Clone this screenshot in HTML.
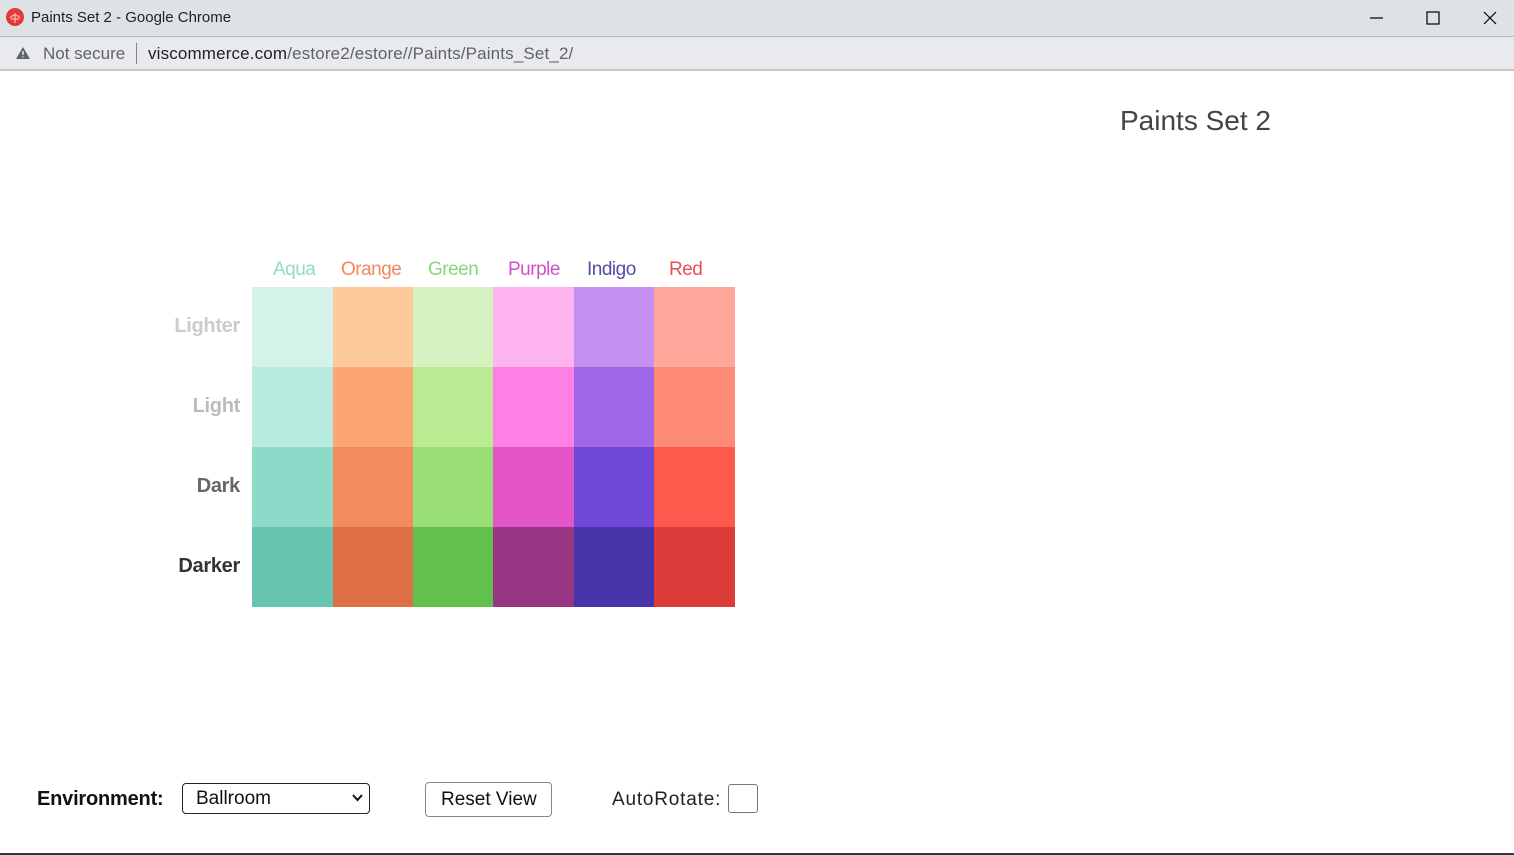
<!DOCTYPE html>
<html><head><meta charset="utf-8"><style>
*{margin:0;padding:0;box-sizing:border-box}
body{width:1514px;height:855px;position:relative;background:#fff;font-family:"Liberation Sans",sans-serif;overflow:hidden}
.a{position:absolute;white-space:nowrap}
.cell{position:absolute;width:81px;height:80px}
.col{font-size:19px;top:259px;letter-spacing:-0.5px}
.row{font-size:20px;font-weight:bold;right:1274px;letter-spacing:-0.3px}
</style></head><body>
<div class="a" style="left:0;top:0;width:1514px;height:36px;background:#dee1e6"></div>
<div class="a" style="left:0;top:36px;width:1514px;height:1px;background:#b8babe"></div>
<div class="a" style="left:0;top:37px;width:1514px;height:32px;background:#e8eaed"></div>
<div class="a" style="left:0;top:69px;width:1514px;height:2px;background:#c4c6c9"></div>
<div class="a" style="left:6px;top:8px;width:18px;height:18px;border-radius:50%;background:#e53935"></div>
<svg class="a" style="left:6px;top:8px" width="18" height="18"><path d="M4 10 Q9 4 14 10 M9 5 V15 M5 11 H13" stroke="#fbb" stroke-width="1.2" fill="none"/></svg>
<div class="a" style="left:31px;top:9px;font-size:15px;color:#202124">Paints Set 2 - Google Chrome</div>
<svg class="a" style="left:1370px;top:10px" width="130" height="16"><path d="M0 8H13" stroke="#000" stroke-width="1.2"/><rect x="57" y="2" width="12" height="12" fill="none" stroke="#000" stroke-width="1.2"/><path d="M114 2L126 14M126 2L114 14" stroke="#000" stroke-width="1.2"/></svg>
<svg class="a" style="left:15px;top:46px" width="16" height="14"><path d="M8 1L15 13H1Z" fill="#5f6368"/><path d="M8 5V9M8 10.5V11.5" stroke="#e8eaed" stroke-width="1.5"/></svg>
<div class="a" style="left:43px;top:44px;font-size:17px;color:#5f6368">Not secure</div>
<div class="a" style="left:136px;top:43px;width:1px;height:21px;background:#80868b"></div>
<div class="a" style="left:148px;top:44px;font-size:17px;color:#202124;letter-spacing:0.15px">viscommerce.com<span style="color:#5f6368">/estore2/estore//Paints/Paints_Set_2/</span></div>
<div class="a" style="left:1120px;top:105px;font-size:28px;color:#444">Paints Set 2</div>

<div class="a col" style="left:273px;color:#8fdcc8">Aqua</div>
<div class="a col" style="left:341px;color:#f08a5e">Orange</div>
<div class="a col" style="left:428px;color:#88d878">Green</div>
<div class="a col" style="left:508px;color:#d050c8">Purple</div>
<div class="a col" style="left:587px;color:#5a48a8">Indigo</div>
<div class="a col" style="left:669px;color:#e85050">Red</div>

<div class="a row" style="top:315px;color:#ccc">Lighter</div>
<div class="a row" style="top:395px;color:#bbb">Light</div>
<div class="a row" style="top:475px;color:#666">Dark</div>
<div class="a row" style="top:555px;color:#333">Darker</div>

<div class="cell" style="left:252px;top:287px;background:#d4f2ea"></div>
<div class="cell" style="left:333px;top:287px;background:#fcc99a"></div>
<div class="cell" style="left:413px;top:287px;background:#d6f2c0"></div>
<div class="cell" style="left:493px;top:287px;background:#feb4ee"></div>
<div class="cell" style="left:574px;top:287px;background:#c490f2"></div>
<div class="cell" style="left:654px;top:287px;background:#fea89c"></div>

<div class="cell" style="left:252px;top:367px;background:#b8eadf"></div>
<div class="cell" style="left:333px;top:367px;background:#fca772"></div>
<div class="cell" style="left:413px;top:367px;background:#baea92"></div>
<div class="cell" style="left:493px;top:367px;background:#fe80e6"></div>
<div class="cell" style="left:574px;top:367px;background:#a066e8"></div>
<div class="cell" style="left:654px;top:367px;background:#fe8a78"></div>

<div class="cell" style="left:252px;top:447px;background:#8edac8"></div>
<div class="cell" style="left:333px;top:447px;background:#f28c5c"></div>
<div class="cell" style="left:413px;top:447px;background:#9ade76"></div>
<div class="cell" style="left:493px;top:447px;background:#e456c8"></div>
<div class="cell" style="left:574px;top:447px;background:#7048d8"></div>
<div class="cell" style="left:654px;top:447px;background:#fc5a4c"></div>

<div class="cell" style="left:252px;top:527px;background:#66c4b0"></div>
<div class="cell" style="left:333px;top:527px;background:#de6e44"></div>
<div class="cell" style="left:413px;top:527px;background:#62c04c"></div>
<div class="cell" style="left:493px;top:527px;background:#983684"></div>
<div class="cell" style="left:574px;top:527px;background:#4834a8"></div>
<div class="cell" style="left:654px;top:527px;background:#da3c3a"></div>

<div class="a" style="left:37px;top:788px;font-size:20px;font-weight:bold;color:#111;letter-spacing:-0.2px">Environment:</div>
<div class="a" style="left:182px;top:783px;width:188px;height:31px;border:1px solid #222;border-radius:4px;font-size:19px;padding:4px 0 0 13px;color:#111">Ballroom</div>
<svg class="a" style="left:352px;top:794px" width="11" height="8"><path d="M1 1L5.5 6L10 1" stroke="#111" stroke-width="2" fill="none"/></svg>
<div class="a" style="left:425px;top:782px;width:127px;height:35px;border:1px solid #888;border-radius:4px;font-size:19px;padding:6px 0 0 15px;color:#111">Reset View</div>
<div class="a" style="left:612px;top:789px;font-size:19px;color:#222;letter-spacing:0.8px">AutoRotate:</div>
<div class="a" style="left:728px;top:784px;width:30px;height:29px;border:1px solid #777;border-radius:3px"></div>
<div class="a" style="left:0;top:853px;width:1514px;height:2px;background:#2c3e3a"></div>
</body></html>
